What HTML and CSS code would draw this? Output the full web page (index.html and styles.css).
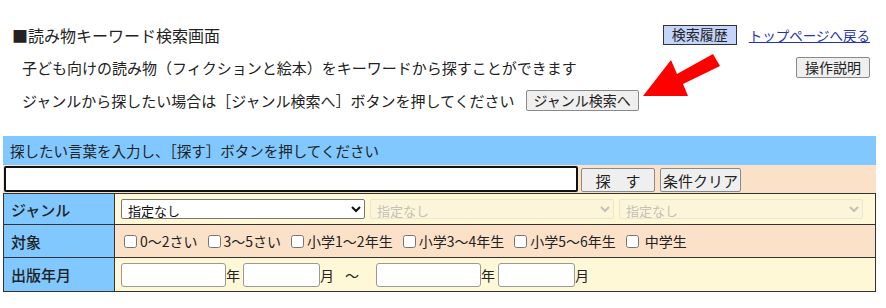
FILE: index.html
```html
<!DOCTYPE html>
<html lang="ja">
<head>
  <meta charset="UTF-8">
  <title>読み物キーワード検索画面</title>
  <link rel="stylesheet" href="styles.css">
</head>
<body>
  <div class="page">
    <div class="intro">
      <div class="intro-row">
        <div class="page-title">■読み物キーワード検索画面</div>
        <div class="intro-side">
          <button class="btn btn-history">検索履歴</button>
          <a class="top-link" href="#">トップページへ戻る</a>
        </div>
      </div>
      <div class="intro-row">
        <div class="intro-text grow">子ども向けの読み物（フィクションと絵本）をキーワードから探すことができます</div>
        <div class="intro-side">
          <button class="btn btn-help">操作説明</button>
        </div>
      </div>
      <div class="intro-row">
        <div class="intro-text">ジャンルから探したい場合は［ジャンル検索へ］ボタンを押してください</div>
        <button class="btn btn-genre">ジャンル検索へ</button>
      </div>

      <svg class="arrow" width="84" height="52" viewBox="0 0 84 52">
        <polygon points="3,46 31,10 37,24 73,4 80,16 43,34 48,46" fill="#ff0000"/>
      </svg>
    </div>

    <div class="search">
      <div class="search-head">探したい言葉を入力し、［探す］ボタンを押してください</div>
      <div class="search-bar">
        <input type="text" class="keyword">
        <button class="btn btn-search">探　す</button>
        <button class="btn btn-clear">条件クリア</button>
      </div>

      <table class="cond">
        <tr class="row-yellow">
          <th>ジャンル</th>
          <td>
            <div class="selects">
              <select class="sel"><option>指定なし</option></select>
              <select class="sel" disabled><option>指定なし</option></select>
              <select class="sel" disabled><option>指定なし</option></select>
            </div>
          </td>
        </tr>
        <tr class="row-peach">
          <th>対象</th>
          <td>
            <div class="checks">
              <label><input type="checkbox">0～2さい</label>
              <label><input type="checkbox">3～5さい</label>
              <label><input type="checkbox">小学1～2年生</label>
              <label><input type="checkbox">小学3～4年生</label>
              <label><input type="checkbox">小学5～6年生</label>
              <label><input type="checkbox">&nbsp;中学生</label>
            </div>
          </td>
        </tr>
        <tr class="row-yellow">
          <th>出版年月</th>
          <td>
            <div class="dates">
              <input type="text" class="year"><span>年</span>
              <input type="text" class="month"><span>月</span>
              <span class="tilde">～</span>
              <input type="text" class="year"><span>年</span>
              <input type="text" class="month"><span>月</span>
            </div>
          </td>
        </tr>
      </table>
    </div>
  </div>
</body>
</html>
```

FILE: styles.css
```css
body {
  margin: 0;
  font-family: "Noto Sans CJK JP", "Noto Sans", sans-serif;
  color: #222;
  background: #fff;
}

.page {
  width: 873px;
  padding-left: 3px;
}

.intro {
  position: relative;
  padding: 18px 0 19px 0;
}

.intro-row {
  display: flex;
  align-items: center;
  height: 33px;
}

.page-title {
  padding-left: 9px;
  font-size: 16px;
  flex: 1;
}

.intro-text {
  padding-left: 19px;
  font-size: 15px;
}

.intro-text.grow {
  flex: 1;
}

.intro-side {
  display: flex;
  align-items: center;
  gap: 12px;
  padding-right: 6px;
}

.btn {
  font-family: inherit;
  font-size: 14px;
  color: #222;
  background: #efefef;
  border: 1px solid #8a8a8a;
  border-radius: 2px;
  height: 21px;
  padding: 0;
  line-height: 17px;
  white-space: nowrap;
  cursor: pointer;
}

.btn-history {
  background: #c4d4fb;
  border: 1px solid #333;
  border-radius: 0;
  height: 20px;
  width: 74px;
}

.btn-help {
  width: 74px;
}

.btn-genre {
  margin-left: 11px;
  width: 113px;
}

.top-link {
  color: #2233bb;
  font-size: 13.5px;
}

.arrow {
  position: absolute;
  left: 637px;
  top: 50px;
}

.search-head {
  background: #80c8ff;
  height: 29px;
  line-height: 29px;
  padding-left: 7px;
  font-size: 14.5px;
}

.search-bar {
  display: flex;
  align-items: center;
  background: #fce1c9;
  height: 28px;
}

.keyword {
  width: 566px;
  height: 22px;
  margin-left: 1px;
  border: 2px solid #111;
  border-radius: 2px;
  padding: 0 2px;
  box-sizing: content-box;
}

.btn-search {
  margin-left: 3px;
  width: 74px;
  height: 24px;
  font-size: 15px;
  margin-top: 2px;
}

.btn-clear {
  margin-left: 5px;
  width: 81px;
  height: 24px;
  font-size: 15px;
  margin-top: 2px;
}

.cond {
  width: 873px;
  border-collapse: collapse;
  border: 1px solid #333;
}

.cond th,
.cond td {
  border: 1px solid #333;
  padding: 0;
}

.cond th {
  width: 103px;
  background: #80c8ff;
  text-align: left;
  font-weight: 500;
  font-size: 15px;
  padding-left: 7px;
}

.row-yellow td {
  background: #fff8d6;
}

.row-peach td {
  background: #fce1c9;
}

.cond tr:nth-child(1) {
  height: 31px;
}

.cond tr:nth-child(2) {
  height: 33px;
}

.cond tr:nth-child(3) {
  height: 34px;
}

.selects {
  display: flex;
  gap: 5px;
  padding-left: 6px;
}

.sel {
  width: 244px;
  height: 20px;
  font-family: inherit;
  font-size: 13px;
  border: 1px solid #767676;
  border-radius: 2px;
  background: #fff;
  color: #111;
  padding: 0 2px;
}

.sel:disabled {
  background: #fbf5dc;
  border-color: #e3dfca;
  color: #aaa;
}

.checks {
  display: flex;
  padding-left: 9px;
  font-size: 14px;
  gap: 10px;
}

.checks label {
  display: flex;
  align-items: center;
}

.checks input {
  width: 13px;
  height: 13px;
  margin: 0 3px 0 0;
}

.dates {
  display: flex;
  align-items: center;
  padding-left: 6px;
  font-size: 14px;
}

.dates input {
  height: 22px;
  border: 1px solid #999;
  border-radius: 3px;
  padding: 0;
  box-sizing: content-box;
}

.dates .year {
  width: 103px;
}

.dates .month {
  width: 75px;
}

.dates span {
  margin-right: 3px;
}

.dates .tilde {
  margin: 0 17px 0 8px;
}
```
